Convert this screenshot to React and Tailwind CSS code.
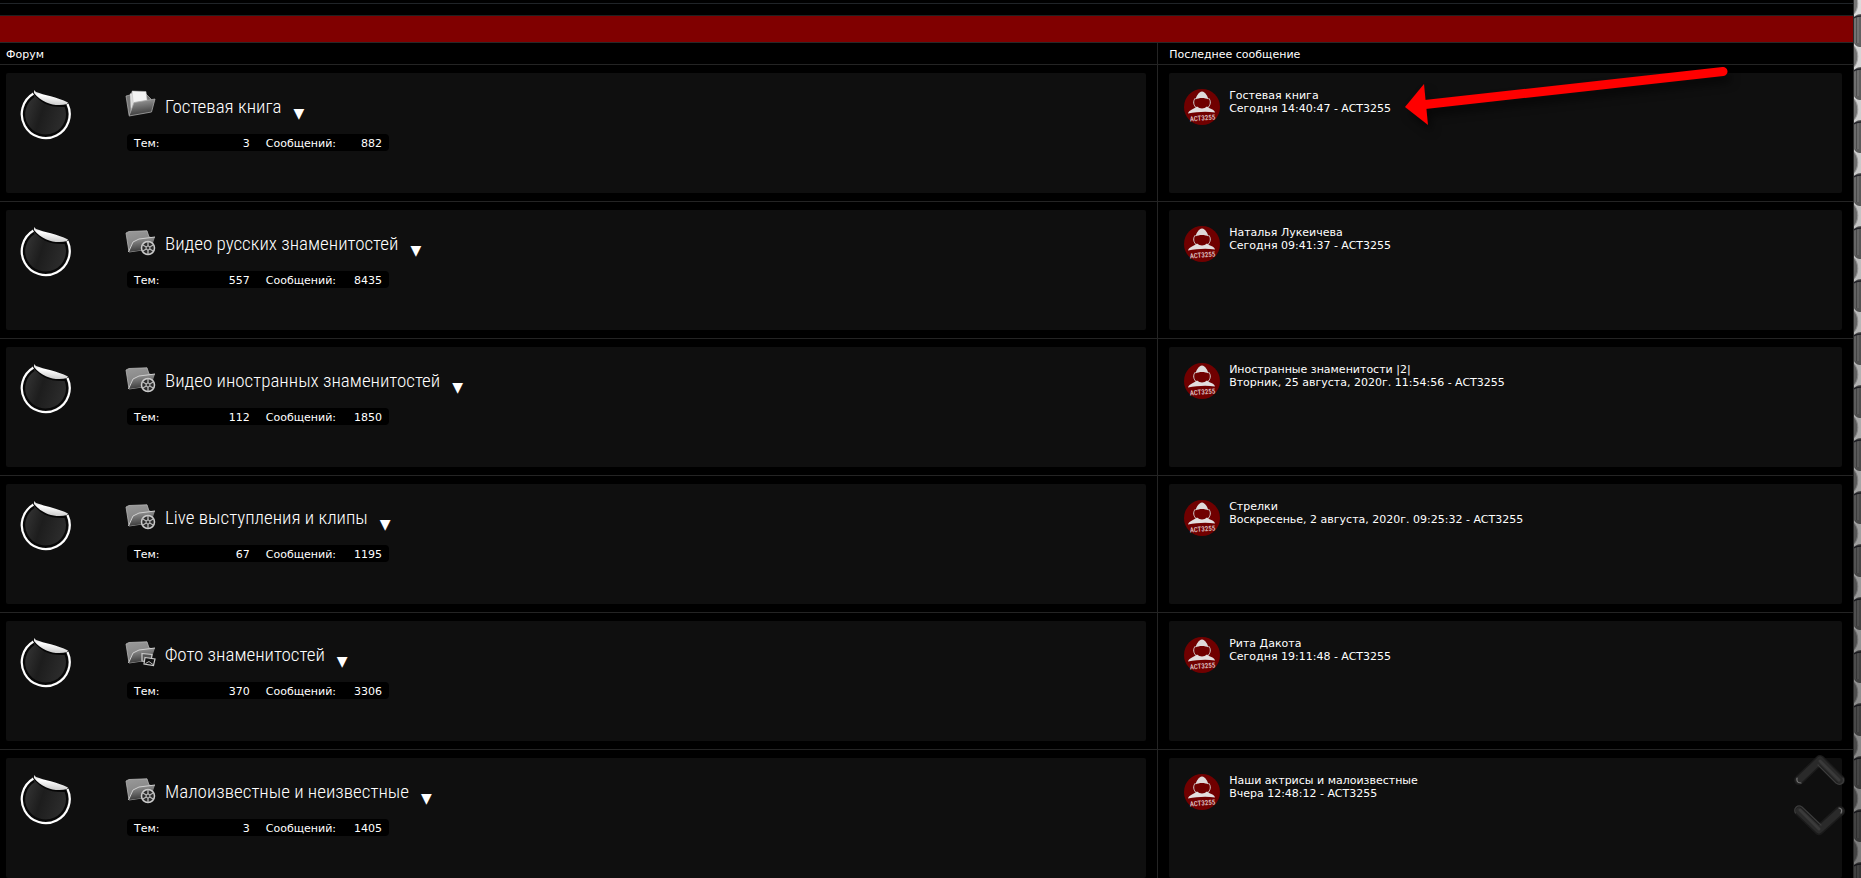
import React from "react";

const forums = [
  { icon: "papers", title: "Гостевая книга", topics: 3, posts: 882, last: "Гостевая книга", when: "Сегодня 14:40:47 - ACT3255" },
  { icon: "reel", title: "Видео русских знаменитостей", topics: 557, posts: 8435, last: "Наталья Лукеичева", when: "Сегодня 09:41:37 - ACT3255" },
  { icon: "reel", title: "Видео иностранных знаменитостей", topics: 112, posts: 1850, last: "Иностранные знаменитости |2|", when: "Вторник, 25 августа, 2020г. 11:54:56 - ACT3255" },
  { icon: "reel", title: "Live выступления и клипы", topics: 67, posts: 1195, last: "Стрелки", when: "Воскресенье, 2 августа, 2020г. 09:25:32 - ACT3255" },
  { icon: "photo", title: "Фото знаменитостей", topics: 370, posts: 3306, last: "Рита Дакота", when: "Сегодня 19:11:48 - ACT3255" },
  { icon: "reel", title: "Малоизвестные и неизвестные", topics: 3, posts: 1405, last: "Наши актрисы и малоизвестные", when: "Вчера 12:48:12 - ACT3255" },
];

function Defs() {
  return (
    <svg className="absolute size-0" aria-hidden="true">
      <defs>
        <linearGradient id="disc" x1="0" y1="0" x2="1" y2="0.3">
          <stop offset="0" stopColor="#3c3c3c" />
          <stop offset="0.5" stopColor="#1d1d1d" />
          <stop offset="1" stopColor="#2d2d2d" />
        </linearGradient>
        <linearGradient id="peel" x1="0.6" y1="0" x2="0.45" y2="1">
          <stop offset="0" stopColor="#c4c4c4" />
          <stop offset="0.4" stopColor="#ffffff" />
          <stop offset="1" stopColor="#c8c8c8" />
        </linearGradient>
        <linearGradient id="folderBack" x1="0" y1="0" x2="0.3" y2="1">
          <stop offset="0" stopColor="#9a9a9a" />
          <stop offset="1" stopColor="#7c7c7c" />
        </linearGradient>
        <linearGradient id="folderFront" x1="0" y1="0" x2="0.2" y2="1">
          <stop offset="0" stopColor="#a2a2a2" />
          <stop offset="1" stopColor="#3c3c3c" />
        </linearGradient>
        <linearGradient id="shade" x1="0" y1="0" x2="0" y2="1">
          <stop offset="0" stopColor="#000" stopOpacity="0" />
          <stop offset="1" stopColor="#000" stopOpacity="0.45" />
        </linearGradient>
        <pattern id="chain" width="7" height="53" y="43" patternUnits="userSpaceOnUse">
          <rect width="7" height="53" fill="#626262" />
          <path d="M1 27V53M4 27V53" stroke="#858585" />
          <path d="M2.500 27V53" stroke="#505050" />
          <path d="M0 0C2 4 5 4 7 4V24C4 24 2 25 0 27Z" fill="#dcdcdc" />
          <path d="M0 3C5 8 5 19 0 24Z" fill="#777" />
          <path d="M0 3C5 8 5 19 0 24" stroke="#aaa" fill="none" />
          <path d="M0 28C2 26 4 26 7 26" stroke="#25252c" strokeWidth="1.500" fill="none" />
        </pattern>
      </defs>
    </svg>
  );
}

function StatusSticker() {
  return (
    <svg className="mt-4 h-[52px] w-[54px] shrink-0" viewBox="0 0 54 52" role="img" aria-label="Нет новых сообщений">
      <path d="M15 4.700A24 24 0 1 0 49.500 15C39 19 25 15 15 4.700Z" fill="url(#disc)" />
      <path d="M16 7A21.500 21.500 0 1 0 47.500 17" fill="none" stroke="#080808" strokeWidth="2.200" />
      <path d="M15.500 4.500A24 24 0 1 0 49.500 15" fill="none" stroke="#fff" strokeWidth="2.200" />
      <path d="M16 4C22 11.500 29 18 48 17" fill="none" stroke="#060606" strokeWidth="2" />
      <path d="M16 1L18 3C26 6 39 8 50 13.500L49 15C39 18 25 15 16 4Z" fill="url(#peel)" />
    </svg>
  );
}

function FolderIcon({ kind }) {
  return (
    <svg className="h-[30px] w-8 shrink-0" viewBox="0 0 32 30" aria-hidden="true">
      {kind === "papers" ? (
        <g transform="translate(0 1)">
          <path d="M1 6L5 5 6 3 9 2 20 3 26 9 22 22 4 25Z" fill="#777" stroke="#b5b5b5" strokeWidth="0.700" />
          <path d="M5 4L8 3 10 22 6 23Z" fill="#dedede" />
          <path d="M7 1L21 1.500 23 18 9 20Z" fill="#f4f4f4" stroke="#bbb" strokeWidth="0.500" />
          <path d="M9 12.500L30 9 26.500 22 4 26Z" fill="url(#folderFront)" stroke="#aaa" strokeWidth="0.800" />
        </g>
      ) : (
        <g transform="translate(0 4)">
          <path d="M1 3L4 1.500 22 0.800 24 7 28 8 24 19 4 22Z" fill="url(#folderBack)" stroke="#b5b5b5" strokeWidth="0.800" />
          <path d="M8 12L14 9 30 7 26 19 3 22Z" fill="url(#folderFront)" />
          <path d="M3.500 22L8 12 14 9 30 7" fill="none" stroke="#d0d0d0" strokeWidth="1" />
          {kind === "reel" && (
            <>
              <circle cx="23" cy="18" r="6.500" fill="#2c2c2c" stroke="#cccccc" strokeWidth="1.500" />
              <path d="M23 11.500V24.500M17.400 14.800L28.600 21.200M17.400 21.200L28.600 14.800" stroke="#b9b9b9" strokeWidth="1.300" />
              <circle cx="23" cy="18" r="2" fill="#333" stroke="#c6c6c6" />
            </>
          )}
          {kind === "photo" && (
            <>
              <path d="M17 12.500L27 13.500 26 21 17 20Z" fill="#555" stroke="#ccc" strokeWidth="1.200" />
              <path d="M20 16.500L30 18 28.500 24.500 19 23Z" fill="#111" stroke="#ccc" strokeWidth="1.200" />
              <path d="M20.500 22.500L24 20.500 28 23.500" stroke="#bbb" fill="none" />
            </>
          )}
        </g>
      )}
    </svg>
  );
}

function Avatar() {
  return (
    <svg className="size-9 shrink-0" viewBox="0 0 36 36" role="img" aria-label="ACT3255">
      <circle cx="18" cy="18" r="18" fill="#700000" />
      <path d="M18 2.500C14.500 3 12.500 7 11.500 10.500C15 8.500 21 8.500 24.500 10.500C23.500 7 21.500 3 18 2.500Z" fill="#dedada" />
      <path d="M11.500 9C8.500 12 9.500 16.500 12.500 19M24.500 9C27.500 12 26.500 16.500 23.500 19" fill="none" stroke="#d2caca" strokeWidth="1" />
      <path d="M4 24.500C5 21 9.500 20.500 13 17.500C16 20 20 20 23 17.500C26.500 20.500 30 20 31 23.500C22 22 13 22.800 4 24.500Z" fill="#e2dede" />
      <text x="18.500" y="31.500" textAnchor="middle" fontSize="7" fill="#e0caca" transform="rotate(-5 18 29)" className="font-['Roboto_Condensed','Roboto',sans-serif] font-medium">ACT3255</text>
    </svg>
  );
}

function Pointer() {
  return (
    <svg className="pointer-events-none absolute top-0 left-[237px] h-20 w-[350px] overflow-visible" viewBox="0 0 350 80" aria-hidden="true">
      <g className="drop-shadow-[4px_7px_4px_rgba(0,0,0,0.5)]">
        <path d="M30 39.500L328 6.500" stroke="#f00" strokeWidth="9" strokeLinecap="round" />
        <path d="M10 42L29 19 33 60Z" fill="#f00" />
      </g>
    </svg>
  );
}

function ScrollButton({ down }) {
  return (
    <button type="button" aria-label={down ? "Вниз" : "Вверх"} className="block">
      <svg className="h-9 w-[52px]" viewBox="0 0 52 36" fill="none" strokeLinecap="round" strokeLinejoin="round" aria-hidden="true">
        {down ? (
          <>
            <path d="M6 9L26 28 47 9" stroke="#1b1b1b" strokeWidth="10" />
            <path d="M6 9L26 28 47 9" stroke="#2a2a2a" strokeWidth="7" />
            <path d="M2.500 11C0 6 5 2 9 5L28 23" stroke="#3c3c3c" strokeWidth="1.200" />
            <path d="M7 8L26 27" stroke="#3a3a3a" strokeWidth="3" />
            <path d="M46 6Q50 7 48 11" stroke="#777" strokeWidth="1.200" />
          </>
        ) : (
          <>
            <path d="M6 28L27 8 47 28" stroke="#1b1b1b" strokeWidth="10" />
            <path d="M6 28L27 8 47 28" stroke="#2a2a2a" strokeWidth="7" />
            <path d="M50 26C52 31 47 34 43 31L25 13" stroke="#3c3c3c" strokeWidth="1.200" />
            <path d="M27 9L46 28" stroke="#3a3a3a" strokeWidth="3" />
            <path d="M4 26Q3 31 8 31" stroke="#777" strokeWidth="1.200" />
          </>
        )}
      </svg>
    </button>
  );
}

export default function App() {
  return (
    <div className="flex h-screen overflow-hidden bg-black font-['Verdana','DejaVu_Sans',sans-serif] text-[11px] leading-[13px] text-white">
      <Defs />
      <main className="min-w-0 flex-1 border-r border-[#282828]">
        <div className="h-[4px] border-b border-[#202428]" />
        <div className="h-3 border-b border-[#202020]" />
        <div className="h-[27px] border-b border-[#282828] bg-[#800000]" />
        <table className="w-full table-fixed border-separate border-spacing-0">
          <thead>
            <tr className="h-[22px]">
              <th className="w-[62.5%] border-r border-b border-[#242424] p-0 pt-0.5 pl-1.5 text-left font-normal">Форум</th>
              <th className="border-b border-[#242424] p-0 pt-0.5 pl-[11px] text-left font-normal">Последнее сообщение</th>
            </tr>
          </thead>
          <tbody>
            {forums.map((f, i) => (
              <tr key={f.title}>
                <td className="border-r border-b border-[#242424] py-2 pr-[11px] pl-1.5 align-top">
                  <div className="flex h-[120px] rounded-xs bg-[#0f0f0f] pl-3">
                    <StatusSticker />
                    <div className="ml-[53px] pt-4">
                      <div className="flex h-[30px] items-start">
                        <FolderIcon kind={f.icon} />
                        <a href="#forum" className="ml-2 font-['Roboto_Condensed','Roboto',sans-serif] text-[19px] leading-9 font-light whitespace-nowrap text-white">{f.title}</a>
                        <button type="button" aria-label="Свернуть" className="mt-[18px] ml-3 text-sm leading-3">▼</button>
                      </div>
                      <dl className="mt-[15px] ml-0.5 flex h-[17px] w-[262px] items-center rounded bg-black px-[7px] pt-px">
                        <dt>Тем:</dt>
                        <dd className="flex-1 text-right">{f.topics}</dd>
                        <dt className="ml-4">Сообщений:</dt>
                        <dd className="w-[46px] text-right">{f.posts}</dd>
                      </dl>
                    </div>
                  </div>
                </td>
                <td className="relative border-b border-[#242424] px-[11px] py-2 align-top">
                  <div className="flex h-[120px] gap-[9px] rounded-xs bg-[#0f0f0f] pt-4 pl-[15px]">
                    <Avatar />
                    <div className="whitespace-nowrap">
                      <a href="#topic" className="block">{f.last}</a>
                      <a href="#post" className="block">{f.when}</a>
                    </div>
                  </div>
                  {i === 0 && <Pointer />}
                </td>
              </tr>
            ))}
          </tbody>
        </table>
      </main>
      <svg className="h-full w-[7px] shrink-0" aria-hidden="true">
        <rect width="7" height="100%" fill="url(#chain)" />
        <rect width="7" height="100%" fill="url(#shade)" />
      </svg>
      <nav className="fixed right-4 bottom-10 flex flex-col gap-3.5">
        <ScrollButton />
        <ScrollButton down />
      </nav>
    </div>
  );
}
